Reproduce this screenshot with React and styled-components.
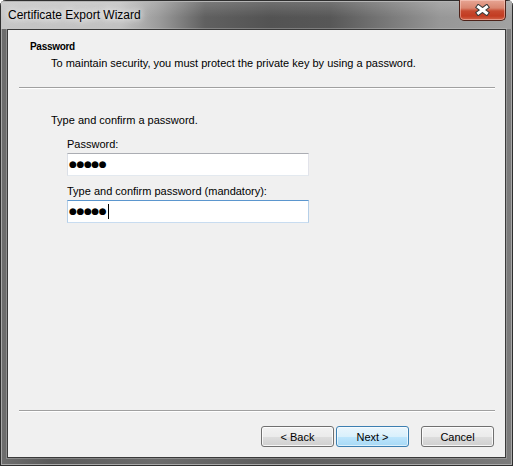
import React from 'react';
import styled, {createGlobalStyle} from 'styled-components';

const GlobalStyle = createGlobalStyle`
    html, body {
        margin:0;
        padding:0;
        background:#ffffff;
    }
    body{
        font-family:"Liberation Sans", Arial, sans-serif;
        font-size:11px;
        color:#000;
    }
`

const Window = styled.div`
    width:513px;
    height:466px;
    box-sizing:border-box;
    display:flex;
    flex-direction:column;
    background: linear-gradient(90deg, #6e6e6e 0%, #5a5a5a 10%, #6c6c6c 30%, #5c5c5c 55%, #6a6a6a 80%, #7c7c7c 100%);
    box-shadow: inset 0 0 0 1px #2e2e2e, inset 0 0 0 2px #a8a8a8;
    border-radius:6px 6px 0 0;
    overflow:hidden;
`

const TitleBar = styled.div`
    height:29px;
    flex-shrink:0;
    display:flex;
    align-items:flex-start;
    background:
        linear-gradient(180deg, rgba(255,255,255,0.18) 0%, rgba(255,255,255,0) 60%),
        linear-gradient(90deg, #c6c6c6 0px, #c2c2c2 120px, #9a9a9a 160px, #606060 205px, #535353 270px, #575757 330px, #7a7a7a 390px, #979797 440px, #a2a2a2 513px);
    box-shadow: inset 0 1px 0 #2e2e2e, inset 1px 0 0 #2e2e2e, inset -1px 0 0 #2e2e2e, inset 0 2px 0 #b4b4b4;
`

const Title = styled.span`
    margin:8px 0 0 8px;
    line-height:15px;
    font-size:12px;
    color:#000;
    text-shadow: 0 0 6px #fff, 0 0 10px rgba(255,255,255,0.9);
`

const CloseButton = styled.button`
    margin-left:auto;
    margin-right:7px;
    width:47px;
    height:21px;
    padding:0;
    display:flex;
    align-items:center;
    justify-content:center;
    border:1px solid #4e2219;
    border-top:none;
    border-radius:0 0 5px 5px;
    background: linear-gradient(180deg, #e7a594 0%, #d98670 40%, #c7492f 55%, #c23c22 80%, #d2654a 100%);
    box-shadow: inset 0 0 0 1px rgba(255,220,210,0.45);
    outline:none;
    svg{ display:block; margin-top:-1px; }
`

const Client = styled.div`
    flex:1;
    margin:0 7px 8px 7px;
    border:1px solid #3a3a3a;
    box-shadow: 0 0 0 1px rgba(200,200,200,0.35);
    background:#f0f0f0;
    display:flex;
    flex-direction:column;
`

const Header = styled.div`
    padding:9px 0 0 22px;
    line-height:16px;
`

const HeaderTitle = styled.div`
    font-weight:bold;
    font-size:10px;
    letter-spacing:-0.3px;
`

const HeaderText = styled.div`
    padding-left:21px;
`

const Separator = styled.div`
    height:0;
    border-top:1px solid #a0a0a0;
    border-bottom:1px solid #ffffff;
    margin:${props => props.$top}px 10px 0 11px;
`

const Body = styled.div`
    flex:1;
    padding:23px 0 0 43px;
    line-height:16px;
    display:flex;
    flex-direction:column;
`

const Field = styled.div`
    margin-left:16px;
    margin-top:${props => props.$top}px;
    display:flex;
    flex-direction:column;
`

const Label = styled.div`
    margin-bottom:1px;
`

const TextBox = styled.div`
    width:242px;
    height:23px;
    box-sizing:border-box;
    background:#fff;
    border:1px solid;
    border-color:${props => props.$focused ? '#5b96ce #b5cfe8 #c8dcf0 #b5cfe8' : '#abadb3 #e2e3ea #e3e9ef #dbdfe6'};
    display:flex;
    align-items:center;
    padding-left:1px;
`

const Dots = styled.span`
    font-family:"DejaVu Sans", sans-serif;
    font-size:9px;
    letter-spacing:-0.4px;
    line-height:15px;
`

const Caret = styled.span`
    display:inline-block;
    width:1px;
    height:15px;
    background:#000;
    margin-left:2px;
`

const Footer = styled.div`
    display:flex;
    justify-content:flex-end;
    padding:14px 11px 10px 0;
`

const Button = styled.button`
    width:73px;
    height:21px;
    margin-left:${props => props.$gap}px;
    padding:0;
    font-family:"Liberation Sans", Arial, sans-serif;
    font-size:11px;
    color:#000;
    border:1px solid ${props => props.$default ? '#3c7fb1' : '#707070'};
    border-radius:3px;
    background:${props => props.$default
        ? 'linear-gradient(180deg, #eaf6fd 0%, #d9f0fc 50%, #bee6fd 51%, #a7d9f5 100%)'
        : 'linear-gradient(180deg, #f2f2f2 0%, #ebebeb 50%, #dddddd 51%, #cfcfcf 100%)'};
    box-shadow: inset 0 0 0 1px ${props => props.$default ? 'rgba(255,255,255,0.6)' : 'rgba(255,255,255,0.8)'};
    outline:none;
`

const CloseIcon = () => (
    <svg width="15" height="12" viewBox="0 0 15 12">
        <path d="M3.5 3 L11.5 9 M11.5 3 L3.5 9" stroke="#3a3a3a" strokeWidth="5" strokeLinecap="square" fill="none"/>
        <path d="M3.5 3 L11.5 9 M11.5 3 L3.5 9" stroke="#ffffff" strokeWidth="3" strokeLinecap="square" fill="none"/>
    </svg>
)

const PasswordBox = ({focused}) => (
    <TextBox $focused={focused}>
        <Dots>●●●●●</Dots>
        {focused && <Caret/>}
    </TextBox>
)

export default function App(){
    return(
        <>
            <GlobalStyle/>
            <Window>
                <TitleBar>
                    <Title>Certificate Export Wizard</Title>
                    <CloseButton><CloseIcon/></CloseButton>
                </TitleBar>
                <Client>
                    <Header>
                        <HeaderTitle>Password</HeaderTitle>
                        <HeaderText>To maintain security, you must protect the private key by using a password.</HeaderText>
                    </Header>
                    <Separator $top={16}/>
                    <Body>
                        <div>Type and confirm a password.</div>
                        <Field $top={8}>
                            <Label>Password:</Label>
                            <PasswordBox/>
                        </Field>
                        <Field $top={7}>
                            <Label>Type and confirm password (mandatory):</Label>
                            <PasswordBox focused/>
                        </Field>
                    </Body>
                    <Separator $top={0}/>
                    <Footer>
                        <Button $gap={0}>&lt; Back</Button>
                        <Button $gap={2} $default>Next &gt;</Button>
                        <Button $gap={12}>Cancel</Button>
                    </Footer>
                </Client>
            </Window>
        </>
    )
}
